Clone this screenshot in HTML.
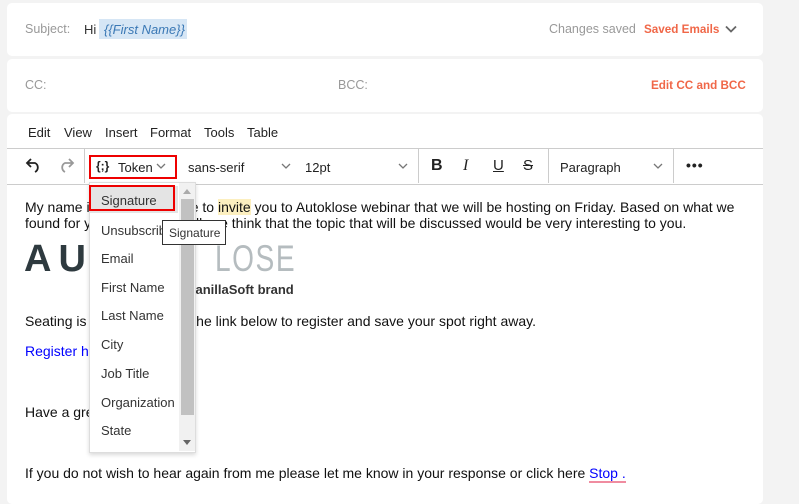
<!DOCTYPE html>
<html><head><style>
body{margin:0;width:799px;height:498px;background:#f3f3f3;position:relative;overflow:hidden;font-family:"Liberation Sans",Arial,sans-serif}
.a{position:absolute;white-space:nowrap}
.card{position:absolute;left:7px;width:756px;background:#fff;border-radius:5px}
.g{color:#999;font-size:12.5px}
.o{color:#f06748;font-weight:bold;font-size:11.7px}
.m{font-size:13px;color:#222}
.b{font-size:14px;color:#111}
.dd{font-size:13px;color:#333}
</style></head><body>
<div class="card" style="top:3px;height:53px"></div>
<div class="card" style="top:59px;height:53px"></div>
<div class="card" style="top:114px;height:390px"></div>

<div class="a g" style="left:25px;top:22px">Subject:</div>
<div class="a" style="left:84px;top:22px;font-size:13px;color:#333">Hi</div>
<div class="a" style="left:99px;top:19px;width:88px;height:20px;background:#d6e6f5"></div>
<div class="a" style="left:104px;top:22px;font-size:13px;color:#3a78b5;font-style:italic">{{First Name}}</div>
<div class="a g" style="left:549px;top:22px">Changes saved</div>
<div class="a o" style="left:644px;top:23px">Saved Emails</div>
<svg class="a" style="left:725px;top:25px" width="12" height="8"><path d="M1 1.5l5 5 5-5" stroke="#666" stroke-width="1.8" fill="none"/></svg>

<div class="a g" style="left:25px;top:78px">CC:</div>
<div class="a g" style="left:338px;top:78px">BCC:</div>
<div class="a o" style="left:651px;top:79px">Edit CC and BCC</div>

<div class="a m" style="left:28px;top:125px">Edit</div>
<div class="a m" style="left:64px;top:125px">View</div>
<div class="a m" style="left:105px;top:125px">Insert</div>
<div class="a m" style="left:150px;top:125px">Format</div>
<div class="a m" style="left:204px;top:125px">Tools</div>
<div class="a m" style="left:247px;top:125px">Table</div>

<div class="a" style="left:7px;top:148px;width:756px;height:35px;border-top:1px solid #ccc;border-bottom:1px solid #ccc"></div>
<div class="a" style="left:84px;top:149px;width:1px;height:34px;background:#ccc"></div>
<div class="a" style="left:418px;top:149px;width:1px;height:34px;background:#ccc"></div>
<div class="a" style="left:548px;top:149px;width:1px;height:34px;background:#ccc"></div>
<div class="a" style="left:673px;top:149px;width:1px;height:34px;background:#ccc"></div>
<svg class="a" style="left:25px;top:157px" width="18" height="16"><path d="M6 2L2 6l4 4M2 6h8a5 5 0 0 1 0 9" stroke="#222" stroke-width="1.8" fill="none"/></svg>
<svg class="a" style="left:57px;top:157px" width="18" height="16"><path d="M12 2l4 4-4 4M16 6H8a5 5 0 0 0 0 9" stroke="#999" stroke-width="1.8" fill="none"/></svg>
<div class="a" style="left:89px;top:155px;width:84px;height:20px;border:2px solid #e00"></div>
<div class="a" style="left:96px;top:159px;font-size:12px;font-weight:bold;color:#222">{;}</div>
<div class="a m" style="left:118px;top:160px">Token</div>
<svg class="a" style="left:156px;top:163px" width="10" height="7"><path d="M1 1l4 4 4-4" stroke="#777" stroke-width="1.3" fill="none"/></svg>
<div class="a m" style="left:188px;top:160px">sans-serif</div>
<svg class="a" style="left:281px;top:163px" width="10" height="7"><path d="M1 1l4 4 4-4" stroke="#777" stroke-width="1.3" fill="none"/></svg>
<div class="a m" style="left:305px;top:160px">12pt</div>
<svg class="a" style="left:398px;top:163px" width="10" height="7"><path d="M1 1l4 4 4-4" stroke="#777" stroke-width="1.3" fill="none"/></svg>
<div class="a" style="left:431px;top:157px;font-size:16px;font-weight:bold;color:#222">B</div>
<div class="a" style="left:463px;top:157px;font-size:16px;font-style:italic;font-family:'Liberation Serif',serif;color:#222">I</div>
<div class="a" style="left:493px;top:157px;font-size:15px;text-decoration:underline;color:#222">U</div>
<div class="a" style="left:523px;top:157px;font-size:15px;text-decoration:line-through;color:#222">S</div>
<div class="a m" style="left:560px;top:160px">Paragraph</div>
<svg class="a" style="left:653px;top:163px" width="10" height="7"><path d="M1 1l4 4 4-4" stroke="#777" stroke-width="1.3" fill="none"/></svg>
<div class="a" style="left:686px;top:157px;font-size:14px;font-weight:bold;color:#222;letter-spacing:1px">•••</div>

<div class="a b" style="left:25px;top:199px">My name is Pat. I would like to <span style="background:#fcefbf">invite</span> you to Autoklose webinar that we will be hosting on Friday. Based on what we</div>
<div class="a b" style="left:25px;top:215px">found for you</div>
<div class="a b" style="left:196px;top:215px">ll, we think that the topic that will be discussed would be very interesting to you.</div>
<div class="a" style="left:24px;top:238px;font-size:38px;letter-spacing:7px;color:#2e3a3f;font-weight:bold">AU</div>
<div class="a" style="left:215px;top:238px;font-size:37px;color:#b5bcbf;letter-spacing:2px;transform:scaleX(0.76);transform-origin:0 0">LOSE</div>
<div class="a" style="left:175px;top:282px;font-size:13px;font-weight:bold;color:#333">A VanillaSoft brand</div>
<div class="a b" style="left:25px;top:313px">Seating is limited. Click on the link below to register and save your spot right away.</div>
<div class="a b" style="left:25px;top:343px;color:#00f">Register here</div>
<div class="a b" style="left:25px;top:404px">Have a great day!</div>
<div class="a b" style="left:25px;top:465px">If you do not wish to hear again from me please let me know in your response or click here <span style="color:#00f;border-bottom:2px solid #f08ca0">Stop .</span></div>

<div class="a" style="left:89px;top:182px;width:105px;height:269px;background:#fff;border:1px solid #ddd;box-shadow:0 2px 4px rgba(0,0,0,.15)"></div>
<div class="a" style="left:90px;top:186px;width:88px;height:27px;background:#e4e4e4"></div>
<div class="a" style="left:89px;top:185px;width:82px;height:22px;border:2px solid #e00"></div>
<div class="a" style="left:179px;top:183px;width:16px;height:268px;background:#f1f1f1"></div>
<div class="a" style="left:181px;top:199px;width:13px;height:216px;background:#c1c1c1"></div>
<svg class="a" style="left:183px;top:189px" width="8" height="5"><path d="M0 5L4 0l4 5z" fill="#aaa"/></svg>
<svg class="a" style="left:183px;top:440px" width="8" height="5"><path d="M0 0L4 5l4-5z" fill="#666"/></svg>
<div class="a dd" style="left:101px;top:193px">Signature</div>
<div class="a" style="left:90px;top:222px;width:89px;overflow:hidden"><span class="dd" style="margin-left:11px">Unsubscribe</span></div>
<div class="a dd" style="left:101px;top:251px">Email</div>
<div class="a dd" style="left:101px;top:280px">First Name</div>
<div class="a dd" style="left:101px;top:308px">Last Name</div>
<div class="a dd" style="left:101px;top:337px">City</div>
<div class="a dd" style="left:101px;top:366px">Job Title</div>
<div class="a dd" style="left:101px;top:395px">Organization</div>
<div class="a dd" style="left:101px;top:423px">State</div>
<div class="a" style="left:162px;top:220px;width:62px;height:23px;background:#fff;border:1px solid #333"></div>
<div class="a" style="left:169px;top:226px;font-size:12px;color:#333">Signature</div>
</body></html>
